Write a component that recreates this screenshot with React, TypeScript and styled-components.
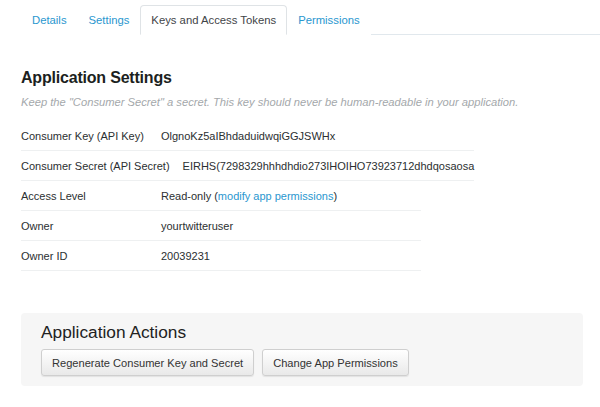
import React from "react";
import styled, { createGlobalStyle } from "styled-components";

const Global = createGlobalStyle`
  html, body { margin: 0; padding: 0; background: #fff; }
  body { font-family: "Liberation Sans", Arial, Helvetica, sans-serif; color: #292f33; }
  * { box-sizing: border-box; }
`;

const Page = styled.div`
  width: 600px;
  height: 407px;
  overflow: hidden;
  padding: 5px 0 0 21px;
`;

const TabBar = styled.ul`
  list-style: none;
  margin: 0;
  padding: 0;
  display: flex;
  align-items: flex-end;
  border-bottom: 1px solid #e1e8ed;
  height: 30px;
`;

const Tab = styled.li<{ $active?: boolean }>`
  height: 30px;
  margin-bottom: -1px;
  padding: 0 10px;
  display: flex;
  align-items: center;
  font-size: 11.3px;
  border: 1px solid ${(p) => (p.$active ? "#dfe3e6" : "transparent")};
  border-bottom-color: ${(p) => (p.$active ? "#fff" : "transparent")};
  border-radius: 4px 4px 0 0;
  background: #fff;
  color: ${(p) => (p.$active ? "#3f4448" : "#2a97cf")};
  cursor: pointer;
`;

const Title = styled.h2`
  margin: 32px 0 0 0;
  font-size: 16px;
  font-weight: bold;
  letter-spacing: -0.2px;
  color: #1c1f21;
  line-height: 22px;
`;

const Hint = styled.p`
  margin: 6px 0 0 0;
  font-size: 11.2px;
  font-style: italic;
  color: #a4a8ab;
  line-height: 14px;
`;

const Tables = styled.div`
  display: flex;
  flex-direction: column;
  align-items: flex-start;
  margin-top: 12px;
`;

const Table = styled.div<{ $min: number }>`
  display: inline-flex;
  flex-direction: column;
  min-width: ${(p) => p.$min}px;
`;

const Row = styled.div`
  display: flex;
  align-items: center;
  height: 30px;
  border-bottom: 1px solid #eef0f1;
  font-size: 11px;
  color: #2b2f31;
  white-space: nowrap;
`;

const Label = styled.span`
  min-width: 140px;
  padding-right: 13px;
`;

const Value = styled.span``;

const Link = styled.a`
  color: #2a97cf;
  text-decoration: none;
`;

const Actions = styled.div`
  margin-top: 42px;
  width: 562px;
  height: 73px;
  background: #f6f6f6;
  border-radius: 4px;
  padding: 9px 20px 0 20px;
`;

const ActionsTitle = styled.h3`
  margin: 0;
  font-size: 17.3px;
  font-weight: normal;
  color: #222;
  line-height: 20px;
`;

const ButtonRow = styled.div`
  display: flex;
  gap: 8px;
  margin-top: 7px;
`;

const Button = styled.button`
  height: 27px;
  padding: 0 10px;
  font-family: "Liberation Sans", Arial, sans-serif;
  font-size: 11.1px;
  color: #333;
  background: linear-gradient(#ffffff, #e9e9e9);
  border: 1px solid #cfcfcf;
  border-radius: 3px;
  box-shadow: 0 1px 1px rgba(0, 0, 0, 0.08);
  cursor: pointer;
`;

export default function App() {
  return (
    <>
      <Global />
      <Page>
        <TabBar>
          <Tab>Details</Tab>
          <Tab>Settings</Tab>
          <Tab $active>Keys and Access Tokens</Tab>
          <Tab>Permissions</Tab>
        </TabBar>
        <Title>Application Settings</Title>
        <Hint>
          Keep the "Consumer Secret" a secret. This key should never be human-readable in your application.
        </Hint>
        <Tables>
          <Table $min={400}>
            <Row>
              <Label>Consumer Key (API Key)</Label>
              <Value>OlgnoKz5aIBhdaduidwqiGGJSWHx</Value>
            </Row>
            <Row>
              <Label>Consumer Secret (API Secret)</Label>
              <Value>EIRHS(7298329hhhdhdio273IHOIHO73923712dhdqosaosa</Value>
            </Row>
          </Table>
          <Table $min={400}>
            <Row>
              <Label>Access Level</Label>
              <Value>
                Read-only (<Link href="#">modify app permissions</Link>)
              </Value>
            </Row>
            <Row>
              <Label>Owner</Label>
              <Value>yourtwitteruser</Value>
            </Row>
            <Row>
              <Label>Owner ID</Label>
              <Value>20039231</Value>
            </Row>
          </Table>
        </Tables>
        <Actions>
          <ActionsTitle>Application Actions</ActionsTitle>
          <ButtonRow>
            <Button>Regenerate Consumer Key and Secret</Button>
            <Button>Change App Permissions</Button>
          </ButtonRow>
        </Actions>
      </Page>
    </>
  );
}
